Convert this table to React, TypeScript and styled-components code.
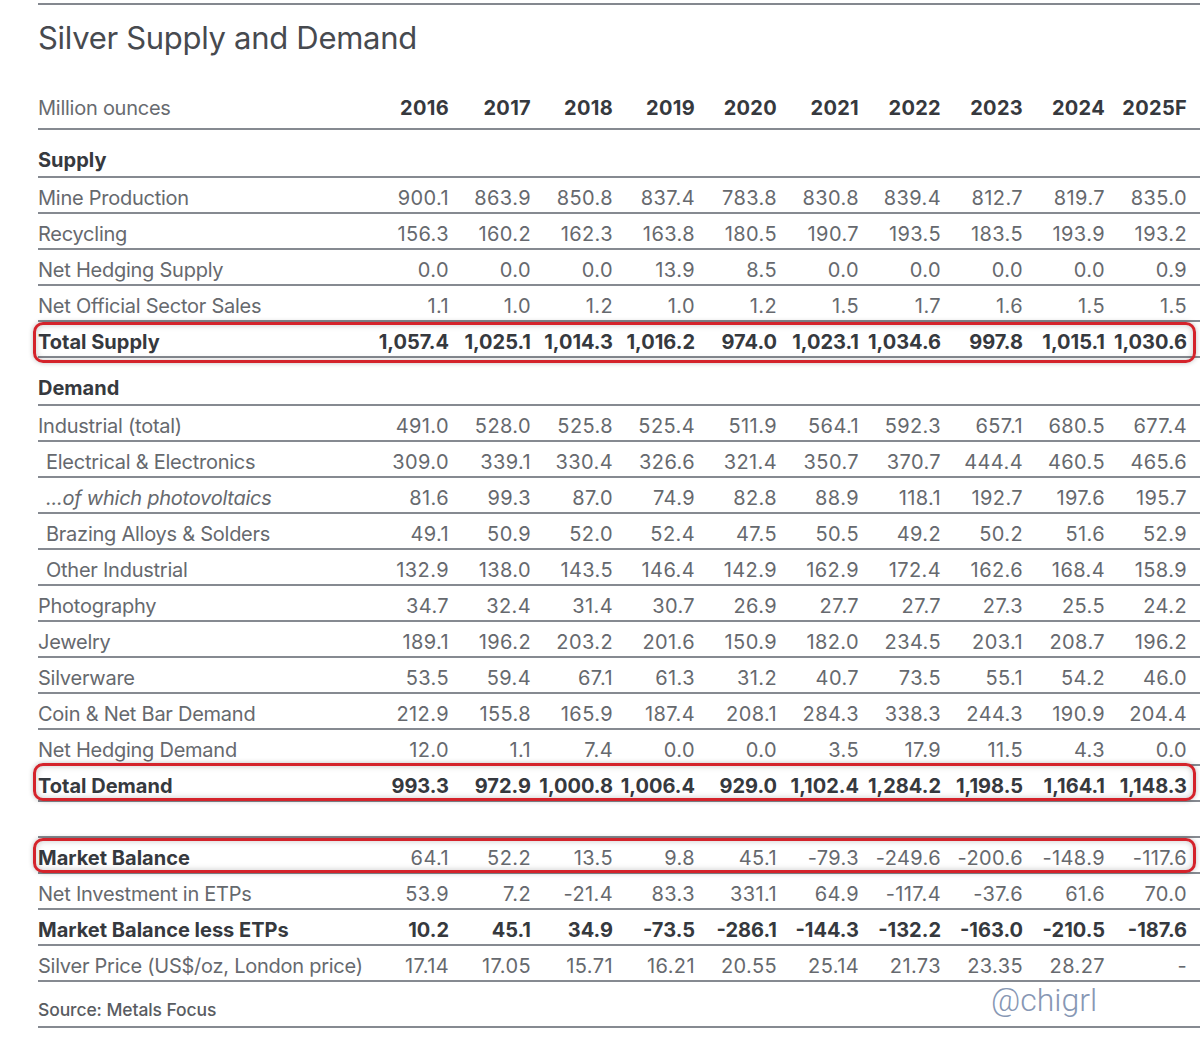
import React from "react";
import styled, { createGlobalStyle, css } from "styled-components";

const GlobalStyle = createGlobalStyle`
  html, body { margin: 0; padding: 0; background: #ffffff; }
  body { overflow: hidden; font-family: "Inter", "Liberation Sans", sans-serif; }
`;

const Sheet = styled.div`
  margin-left: 38px;
  margin-top: 3px;
  width: 1162px;
  border-top: 2px solid #84888f;
`;

const TitleBlock = styled.div`
  padding: 13px 0 22px 0;
`;

const Title = styled.h1`
  margin: 0;
  font-size: 31px;
  line-height: 40px;
  font-weight: 400;
  color: #474a4f;
  letter-spacing: -0.3px;
`;

const grid = css`
  display: grid;
  grid-template-columns: 329px repeat(10, 82px) 13px;
  align-items: center;
  border-bottom: 2px solid #868a91;
  box-sizing: border-box;
`;

const HeaderRow = styled.div`
  ${grid};
  height: 50px;
  padding: 18px 0 10px 0;
  line-height: 20px;
`;

const UnitLabel = styled.div`
  font-size: 20px;
  color: #686b70;
  letter-spacing: -0.25px;
`;

const Year = styled.div`
  text-align: right;
  font-size: 20px;
  font-weight: 700;
  color: #36393e;
  letter-spacing: 0.3px;
`;

const SectionRow = styled.div`
  ${grid};
  height: 48px;
  padding: 20px 0 6px 0;
  line-height: 20px;
`;

const SectionLabel = styled.div`
  font-size: 20px;
  font-weight: 700;
  color: #36393e;
  letter-spacing: 0px;
`;

const Row = styled.div<{ $box?: boolean; $boxTop?: number; $boxBottom?: number }>`
  ${grid};
  position: relative;
  height: 36px;
  padding-top: 5px;
  line-height: 30px;
  ${(p) =>
    p.$box &&
    css`
      &::after {
        content: "";
        position: absolute;
        left: -5px;
        right: 4px;
        top: ${p.$boxTop ?? 0}px;
        bottom: ${p.$boxBottom ?? -1}px;
        border: 3px solid #d4232b;
        border-radius: 10px;
        box-shadow: inset 0 0 6px rgba(0, 0, 0, 0.22), 0 0 5px rgba(0, 0, 0, 0.25);
        pointer-events: none;
      }
    `}
`;

const BlankRow = styled.div`
  ${grid};
  height: 36px;
`;

const Label = styled.div<{ $bold?: boolean; $indent?: boolean; $italic?: boolean }>`
  font-size: 20px;
  letter-spacing: ${(p) => (p.$bold ? "0px" : "-0.25px")};
  white-space: nowrap;
  padding-left: ${(p) => (p.$indent ? "8px" : "0")};
  font-style: ${(p) => (p.$italic ? "italic" : "normal")};
  font-weight: ${(p) => (p.$bold ? 700 : 400)};
  color: ${(p) => (p.$bold ? "#36393e" : "#66696e")};
`;

const Value = styled.div<{ $bold?: boolean }>`
  text-align: right;
  font-size: 20px;
  letter-spacing: ${(p) => (p.$bold ? "0px" : "0.4px")};
  white-space: nowrap;
  font-weight: ${(p) => (p.$bold ? 700 : 400)};
  color: ${(p) => (p.$bold ? "#36393e" : "#66696e")};
`;

const SourceRow = styled.div`
  ${grid};
  position: relative;
  height: 46px;
  padding: 18px 0 6px 0;
  line-height: 20px;
`;

const SourceText = styled.div`
  font-size: 17.5px;
  font-weight: 500;
  color: #595c61;
  letter-spacing: -0.1px;
  white-space: nowrap;
`;

const Watermark = styled.div`
  position: absolute;
  left: 953px;
  top: 1px;
  font-family: "Roboto", "Liberation Sans", sans-serif;
  font-size: 32px;
  line-height: 34px;
  font-weight: 300;
  color: #8797b4;
`;

type DataRow = {
  label: string;
  values: string[];
  bold?: boolean;
  valuesBold?: boolean;
  indent?: boolean;
  italic?: boolean;
  box?: { top: number; bottom: number };
};

const years = ["2016", "2017", "2018", "2019", "2020", "2021", "2022", "2023", "2024", "2025F"];

const v = (s: string) => s.split(" ");

const supply: DataRow[] = [
  { label: "Mine Production", values: v("900.1 863.9 850.8 837.4 783.8 830.8 839.4 812.7 819.7 835.0") },
  { label: "Recycling", values: v("156.3 160.2 162.3 163.8 180.5 190.7 193.5 183.5 193.9 193.2") },
  { label: "Net Hedging Supply", values: v("0.0 0.0 0.0 13.9 8.5 0.0 0.0 0.0 0.0 0.9") },
  { label: "Net Official Sector Sales", values: v("1.1 1.0 1.2 1.0 1.2 1.5 1.7 1.6 1.5 1.5") },
  {
    label: "Total Supply",
    values: v("1,057.4 1,025.1 1,014.3 1,016.2 974.0 1,023.1 1,034.6 997.8 1,015.1 1,030.6"),
    bold: true,
    valuesBold: true,
    box: { top: 0, bottom: -7 },
  },
];

const demand: DataRow[] = [
  { label: "Industrial (total)", values: v("491.0 528.0 525.8 525.4 511.9 564.1 592.3 657.1 680.5 677.4") },
  { label: "Electrical & Electronics", indent: true, values: v("309.0 339.1 330.4 326.6 321.4 350.7 370.7 444.4 460.5 465.6") },
  { label: "...of which photovoltaics", indent: true, italic: true, values: v("81.6 99.3 87.0 74.9 82.8 88.9 118.1 192.7 197.6 195.7") },
  { label: "Brazing Alloys & Solders", indent: true, values: v("49.1 50.9 52.0 52.4 47.5 50.5 49.2 50.2 51.6 52.9") },
  { label: "Other Industrial", indent: true, values: v("132.9 138.0 143.5 146.4 142.9 162.9 172.4 162.6 168.4 158.9") },
  { label: "Photography", values: v("34.7 32.4 31.4 30.7 26.9 27.7 27.7 27.3 25.5 24.2") },
  { label: "Jewelry", values: v("189.1 196.2 203.2 201.6 150.9 182.0 234.5 203.1 208.7 196.2") },
  { label: "Silverware", values: v("53.5 59.4 67.1 61.3 31.2 40.7 73.5 55.1 54.2 46.0") },
  { label: "Coin & Net Bar Demand", values: v("212.9 155.8 165.9 187.4 208.1 284.3 338.3 244.3 190.9 204.4") },
  { label: "Net Hedging Demand", values: v("12.0 1.1 7.4 0.0 0.0 3.5 17.9 11.5 4.3 0.0") },
  {
    label: "Total Demand",
    values: v("993.3 972.9 1,000.8 1,006.4 929.0 1,102.4 1,284.2 1,198.5 1,164.1 1,148.3"),
    bold: true,
    valuesBold: true,
    box: { top: -3, bottom: -1 },
  },
];

const balance: DataRow[] = [
  {
    label: "Market Balance",
    values: v("64.1 52.2 13.5 9.8 45.1 -79.3 -249.6 -200.6 -148.9 -117.6"),
    bold: true,
    box: { top: 0, bottom: -1 },
  },
  { label: "Net Investment in ETPs", values: v("53.9 7.2 -21.4 83.3 331.1 64.9 -117.4 -37.6 61.6 70.0") },
  {
    label: "Market Balance less ETPs",
    values: v("10.2 45.1 34.9 -73.5 -286.1 -144.3 -132.2 -163.0 -210.5 -187.6"),
    bold: true,
    valuesBold: true,
  },
  { label: "Silver Price (US$/oz, London price)", values: v("17.14 17.05 15.71 16.21 20.55 25.14 21.73 23.35 28.27 -") },
];

const renderRow = (r: DataRow) => (
  <Row key={r.label} $box={!!r.box} $boxTop={r.box?.top} $boxBottom={r.box?.bottom}>
    <Label $bold={r.bold} $indent={r.indent} $italic={r.italic}>
      {r.label}
    </Label>
    {r.values.map((val, i) => (
      <Value key={i} $bold={r.valuesBold}>
        {val}
      </Value>
    ))}
  </Row>
);

export default function App() {
  return (
    <>
      <GlobalStyle />
      <Sheet>
        <TitleBlock>
          <Title>Silver Supply and Demand</Title>
        </TitleBlock>
        <HeaderRow>
          <UnitLabel>Million ounces</UnitLabel>
          {years.map((y) => (
            <Year key={y}>{y}</Year>
          ))}
        </HeaderRow>
        <SectionRow>
          <SectionLabel>Supply</SectionLabel>
        </SectionRow>
        {supply.map(renderRow)}
        <SectionRow>
          <SectionLabel>Demand</SectionLabel>
        </SectionRow>
        {demand.map(renderRow)}
        <BlankRow />
        {balance.map(renderRow)}
        <SourceRow>
          <SourceText>Source: Metals Focus</SourceText>
          <Watermark>@chigrl</Watermark>
        </SourceRow>
      </Sheet>
    </>
  );
}
